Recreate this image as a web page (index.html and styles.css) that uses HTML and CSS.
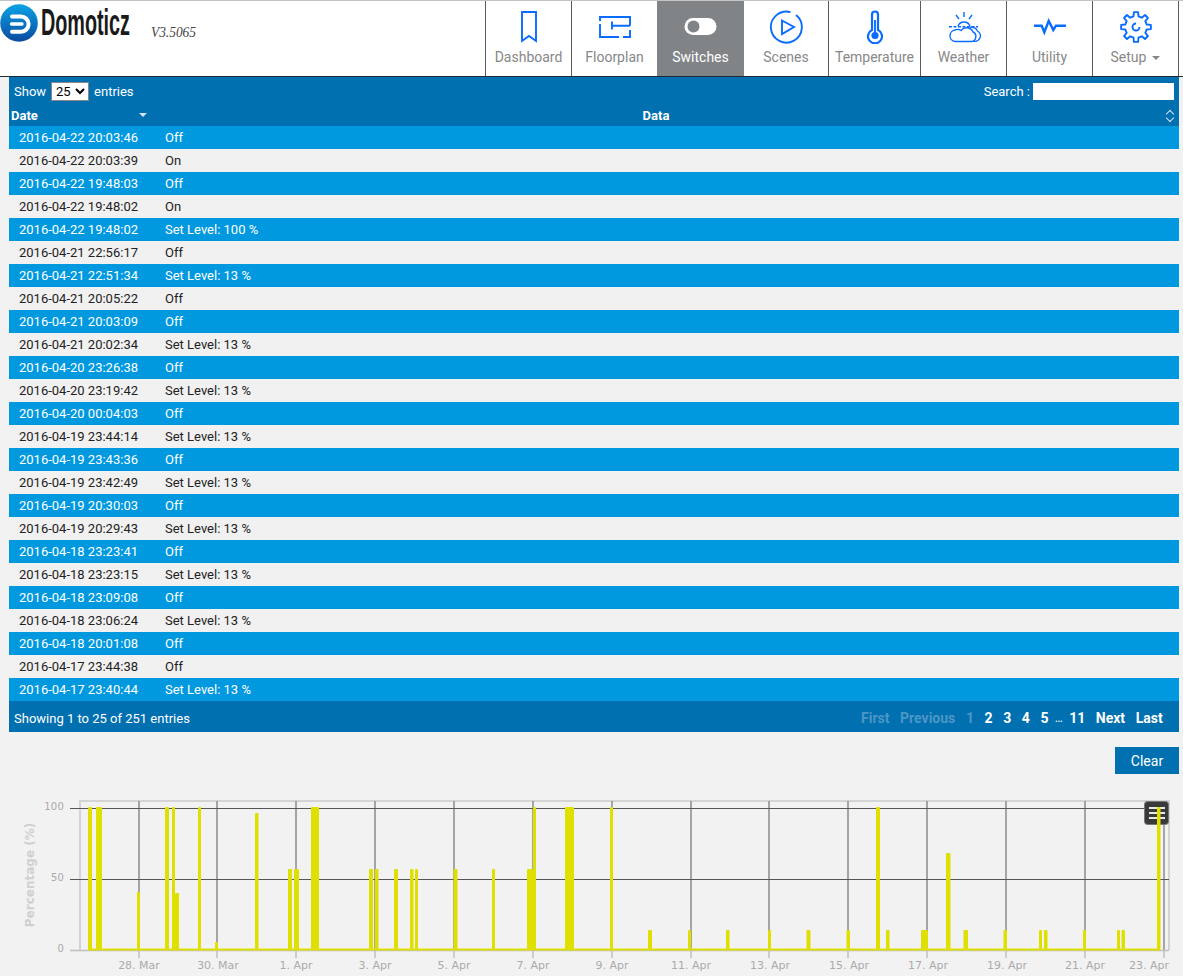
FILE: index.html
```html
<!DOCTYPE html>
<html lang="en">
<head>
<meta charset="utf-8">
<title>Domoticz</title>
<link rel="stylesheet" href="styles.css">
</head>
<body>
<header class="topbar">
  <a class="brand">
    <svg class="brand-logo" width="200" height="50" viewBox="0 0 200 50">
      <defs>
        <linearGradient id="logoFill" x1="0" y1="0" x2="0" y2="1">
          <stop offset="0" stop-color="#0ba3e6"/>
          <stop offset="1" stop-color="#0a4aa0"/>
        </linearGradient>
      </defs>
      <circle cx="19" cy="23" r="18.8" fill="url(#logoFill)"/>
      <path d="M12 16.5H21a7.6 7.6 0 0 1 0 15.200H12" fill="none" stroke="#fff" stroke-width="4" stroke-linecap="round"/>
      <path d="M11.500 24H22" fill="none" stroke="#fff" stroke-width="3.400" stroke-linecap="round"/>
      <text class="brand-name" x="41" y="35" textLength="89" lengthAdjust="spacingAndGlyphs">Domoticz</text>
      <text class="brand-version" x="151" y="37" textLength="45" lengthAdjust="spacingAndGlyphs">V3.5065</text>
    </svg>
  </a>
  <nav class="menu">
    <a class="menu-item">
      <svg class="icon" viewBox="0 0 34 34"><path d="M10 2H24V31L17 26L10 31Z"/></svg>
      <span>Dashboard</span>
    </a>
    <a class="menu-item">
      <svg class="icon" viewBox="0 0 34 34"><path d="M2 11V7H32V15.700M14 15.700H32M14 11.500V19.500M2 14V27H21M25 27H32V20"/></svg>
      <span>Floorplan</span>
    </a>
    <a class="menu-item is-active">
      <svg class="icon" viewBox="0 0 34 34"><rect class="toggle-track" x="0.500" y="8" width="32" height="17" rx="8.500"/><circle class="toggle-knob" cx="9.500" cy="16.500" r="6"/></svg>
      <span>Switches</span>
    </a>
    <a class="menu-item is-scenes">
      <svg class="icon" viewBox="0 0 34 34"><path d="M27 5A15.500 15.500 0 1 1 21.500 2.200"/><path d="M13 10.500L25 17L13 24Z"/></svg>
      <span>Scenes</span>
    </a>
    <a class="menu-item is-wide">
      <svg class="icon" viewBox="0 0 34 34"><path stroke-width="2.200" d="M14 20V4.500a3 3 0 0 1 6 0V20a7 7 0 1 1-6 0Z"/><path d="M17 10V25"/><circle class="icon-fill" cx="17" cy="25.500" r="3.600"/></svg>
      <span>Temperature</span>
    </a>
    <a class="menu-item">
      <svg class="icon icon-thin" viewBox="0 0 34 34"><path d="M17 2V7M9 5L12 9M25 5L22 9"/><path stroke-dasharray="3 1.500" d="M2 16.700H31"/><path d="M11 16A6.500 6.500 0 0 1 23 16"/><path d="M8 31.500H24A5 5 0 0 0 26 22A7 7 0 0 0 14 20.500A6 6 0 0 0 8 20A5.800 5.800 0 0 0 8 31.500Z"/><path d="M26 31A5.500 5.500 0 0 0 30.500 21A7 7 0 0 0 23 17.500"/></svg>
      <span>Weather</span>
    </a>
    <a class="menu-item">
      <svg class="icon" viewBox="0 0 34 34"><path stroke-width="2.400" d="M1 15.700H8.700L11.300 22.300L15.700 11L20.300 20L23 15.700H33"/></svg>
      <span>Utility</span>
    </a>
    <a class="menu-item is-last">
      <svg class="icon" viewBox="0 0 34 34"><path stroke-linejoin="round" d="M14.500 6.300L14.900 2.150H19.100L19.500 6.300L22.830 7.670L26.020 5.020L28.980 7.980L26.330 11.170L27.720 14.530L31.850 14.910V19.090L27.720 19.470L26.330 22.830L28.980 26.020L26.020 28.980L22.830 26.330L19.470 27.720L19.090 31.850H14.910L14.530 27.720L11.170 26.330L7.980 28.980L5.020 26.020L7.670 22.830L6.280 19.470L2.150 19.090V14.910L6.280 14.530L7.670 11.170L5.020 7.980L7.980 5.020L11.170 7.670Z"/><path d="M20.500 17A3.500 3.500 0 1 1 17 13.500"/></svg>
      <span>Setup<i class="caret"></i></span>
    </a>
  </nav>
</header>

<main class="content">
  <section class="log">
    <div class="log-controls">
      <label class="length">Show <select class="length-select"><option>25</option></select> entries</label>
      <label class="search">Search :<input class="search-input" type="text"></label>
    </div>
    <table class="log-table">
      <thead>
        <tr>
          <th class="col-date">Date<i class="sort-down"></i></th>
          <th class="col-data">Data<i class="sort-both"></i></th>
        </tr>
      </thead>
      <tbody>
        <tr><td>2016-04-22 20:03:46</td><td>Off</td></tr>
        <tr><td>2016-04-22 20:03:39</td><td>On</td></tr>
        <tr><td>2016-04-22 19:48:03</td><td>Off</td></tr>
        <tr><td>2016-04-22 19:48:02</td><td>On</td></tr>
        <tr><td>2016-04-22 19:48:02</td><td>Set Level: 100 %</td></tr>
        <tr><td>2016-04-21 22:56:17</td><td>Off</td></tr>
        <tr><td>2016-04-21 22:51:34</td><td>Set Level: 13 %</td></tr>
        <tr><td>2016-04-21 20:05:22</td><td>Off</td></tr>
        <tr><td>2016-04-21 20:03:09</td><td>Off</td></tr>
        <tr><td>2016-04-21 20:02:34</td><td>Set Level: 13 %</td></tr>
        <tr><td>2016-04-20 23:26:38</td><td>Off</td></tr>
        <tr><td>2016-04-20 23:19:42</td><td>Set Level: 13 %</td></tr>
        <tr><td>2016-04-20 00:04:03</td><td>Off</td></tr>
        <tr><td>2016-04-19 23:44:14</td><td>Set Level: 13 %</td></tr>
        <tr><td>2016-04-19 23:43:36</td><td>Off</td></tr>
        <tr><td>2016-04-19 23:42:49</td><td>Set Level: 13 %</td></tr>
        <tr><td>2016-04-19 20:30:03</td><td>Off</td></tr>
        <tr><td>2016-04-19 20:29:43</td><td>Set Level: 13 %</td></tr>
        <tr><td>2016-04-18 23:23:41</td><td>Off</td></tr>
        <tr><td>2016-04-18 23:23:15</td><td>Set Level: 13 %</td></tr>
        <tr><td>2016-04-18 23:09:08</td><td>Off</td></tr>
        <tr><td>2016-04-18 23:06:24</td><td>Set Level: 13 %</td></tr>
        <tr><td>2016-04-18 20:01:08</td><td>Off</td></tr>
        <tr><td>2016-04-17 23:44:38</td><td>Off</td></tr>
        <tr><td>2016-04-17 23:40:44</td><td>Set Level: 13 %</td></tr>
      </tbody>
    </table>
    <div class="log-footer">
      <div>Showing 1 to 25 of 251 entries</div>
      <div class="pager">
        <a class="pager-off">First</a>
        <a class="pager-off">Previous</a>
        <a class="pager-off">1</a>
        <a>2</a>
        <a>3</a>
        <a>4</a>
        <a>5</a>
        <span class="pager-gap">…</span>
        <a>11</a>
        <a>Next</a>
        <a>Last</a>
      </div>
    </div>
  </section>

  <div class="actions"><button class="clear-btn" type="button">Clear</button></div>

  <svg class="chart" width="1183" height="186" viewBox="0 790 1183 186">
    <g class="frame">
      <path d="M80 950V801H1169V950"/>
    </g>
    <g class="grid-v">
      <path d="M139 801V950M217 801V950M296 801V950M375 801V950M454 801V950M533 801V950M612 801V950M691 801V950M769 801V950M848 801V950M927 801V950M1006 801V950M1085 801V950M1164 801V950"/>
    </g>
    <g class="grid-h">
      <path d="M70 808.500H1169M70 879.500H1169"/>
    </g>
    <g class="axis">
      <path d="M70 950.500H1169"/>
      <path d="M139 951V958M217 951V958M296 951V958M375 951V958M454 951V958M533 951V958M612 951V958M691 951V958M769 951V958M848 951V958M927 951V958M1006 951V958M1085 951V958M1164 951V958"/>
    </g>
    <g class="ctx-btn">
      <rect x="1144.500" y="801.500" width="24" height="23" rx="3"/>
      <path d="M1149 808H1165M1149 813H1165M1149 818H1165"/>
    </g>
    <g class="bars">
      <rect x="88" y="807" width="4" height="143" rx="1"/>
      <rect x="96" y="807" width="6" height="143" rx="1"/>
      <rect x="137" y="892" width="3" height="58" rx="1"/>
      <rect x="165" y="807" width="4" height="143" rx="1"/>
      <rect x="172" y="807" width="3" height="143" rx="1"/>
      <rect x="175" y="893" width="4" height="57" rx="1"/>
      <rect x="198" y="807" width="3" height="143" rx="1"/>
      <rect x="215" y="942" width="3" height="8" rx="1"/>
      <rect x="255" y="813" width="3.500" height="137" rx="1"/>
      <rect x="288" y="869" width="4" height="81" rx="1"/>
      <rect x="294" y="869" width="5" height="81" rx="1"/>
      <rect x="311" y="807" width="8" height="143" rx="1"/>
      <rect x="369" y="869" width="4" height="81" rx="1"/>
      <rect x="375" y="869" width="3.500" height="81" rx="1"/>
      <rect x="394" y="869" width="4" height="81" rx="1"/>
      <rect x="410" y="869" width="3.500" height="81" rx="1"/>
      <rect x="415" y="869" width="3" height="81" rx="1"/>
      <rect x="453.500" y="869" width="4" height="81" rx="1"/>
      <rect x="492" y="869" width="3" height="81" rx="1"/>
      <rect x="527" y="869" width="6" height="81" rx="1"/>
      <rect x="533" y="807" width="3" height="143" rx="1"/>
      <rect x="565" y="807" width="9" height="143" rx="1"/>
      <rect x="610" y="807" width="3" height="143" rx="1"/>
      <rect x="648" y="930" width="4" height="20" rx="1"/>
      <rect x="688" y="930" width="3" height="20" rx="1"/>
      <rect x="726" y="930" width="3.500" height="20" rx="1"/>
      <rect x="768" y="930" width="3" height="20" rx="1"/>
      <rect x="806.500" y="930" width="4" height="20" rx="1"/>
      <rect x="846.500" y="930" width="3.500" height="20" rx="1"/>
      <rect x="876" y="807" width="4" height="143" rx="1"/>
      <rect x="886" y="930" width="3.500" height="20" rx="1"/>
      <rect x="921" y="930" width="7" height="20" rx="1"/>
      <rect x="946" y="853" width="4.500" height="97" rx="1"/>
      <rect x="963.500" y="930" width="4.500" height="20" rx="1"/>
      <rect x="1003.500" y="930" width="3.500" height="20" rx="1"/>
      <rect x="1039" y="930" width="3" height="20" rx="1"/>
      <rect x="1044" y="930" width="3.500" height="20" rx="1"/>
      <rect x="1083" y="930" width="3" height="20" rx="1"/>
      <rect x="1117" y="930" width="3" height="20" rx="1"/>
      <rect x="1121.500" y="930" width="3.500" height="20" rx="1"/>
      <rect x="1157" y="807" width="3.500" height="143" rx="1"/>
      <rect x="88" y="948.500" width="1072" height="2"/>
    </g>
    <g class="y-labels">
      <text x="64" y="810">100</text>
      <text x="64" y="881">50</text>
      <text x="64" y="952">0</text>
    </g>
    <text class="y-title" transform="translate(34 875) rotate(-90)">Percentage (%)</text>
    <g class="x-labels">
      <text x="139" y="969">28. Mar</text>
      <text x="218" y="969">30. Mar</text>
      <text x="296" y="969">1. Apr</text>
      <text x="375" y="969">3. Apr</text>
      <text x="454" y="969">5. Apr</text>
      <text x="533" y="969">7. Apr</text>
      <text x="612" y="969">9. Apr</text>
      <text x="691" y="969">11. Apr</text>
      <text x="770" y="969">13. Apr</text>
      <text x="849" y="969">15. Apr</text>
      <text x="928" y="969">17. Apr</text>
      <text x="1007" y="969">19. Apr</text>
      <text x="1085" y="969">21. Apr</text>
      <text x="1149" y="969">23. Apr</text>
    </g>
  </svg>
</main>
</body>
</html>
```
FILE: styles.css
```css
* { box-sizing: border-box; }
html, body { margin: 0; padding: 0; }
body {
  background: #f2f2f2;
  color: #222;
  font-family: Roboto, "Liberation Sans", sans-serif;
  font-size: 13px;
  overflow: hidden;
}

/* top bar */
.topbar {
  display: flex;
  justify-content: space-between;
  height: 77px;
  background: #fff;
  border-top: 1px solid #c4c4c4;
  border-bottom: 1px solid #1d2a33;
  padding-right: 4px;
}
.brand { display: block; margin-top: -1px; }
.brand-logo { display: block; }
.brand-name {
  font-family: "Liberation Sans", sans-serif;
  font-weight: 700;
  font-size: 36px;
  fill: #1a1a1a;
}
.brand-version {
  font-family: "Liberation Serif", serif;
  font-style: italic;
  font-size: 15px;
  fill: #444;
}
.menu { display: flex; }
.menu-item {
  display: flex;
  flex-direction: column;
  align-items: center;
  width: 86px;
  padding-top: 9px;
  border-left: 1px solid #5c5c5c;
  color: #888;
  font-size: 14px;
  line-height: 16px;
}
.menu-item.is-scenes { width: 85px; }
.menu-item.is-wide { width: 92px; }
.menu-item.is-last { width: 87px; border-right: 1px solid #5c5c5c; }
.menu-item.is-active {
  background: #808487;
  border-left-color: #808487;
  color: #fff;
}
.menu-item.is-active + .menu-item { border-left-color: #808487; }
.icon {
  display: block;
  width: 34px;
  height: 34px;
  margin-bottom: 5px;
  fill: none;
  stroke: #0a6cff;
  stroke-width: 1.900;
}
.icon-thin { stroke-width: 1.400; }
.icon-fill { fill: #0a6cff; stroke: none; }
.toggle-track { fill: #fff; stroke: none; }
.toggle-knob { fill: #808487; stroke: none; }
.caret {
  display: inline-block;
  margin-left: 6px;
  vertical-align: 2px;
  border-top: 4px solid #888;
  border-left: 4px solid transparent;
  border-right: 4px solid transparent;
}

/* log table */
.content { padding: 0 4px 0 9px; }
.log { background: #0070b1; color: #fff; }
.log-controls {
  display: flex;
  justify-content: space-between;
  align-items: center;
  height: 28px;
  padding: 0 5px;
}
.length { display: flex; align-items: center; gap: 5px; }
.length-select {
  width: 38px;
  height: 19px;
  margin-top: 1px;
  padding: 0;
  border: 1px solid #888;
  border-radius: 0;
  background: #fff;
  color: #000;
  font-family: Roboto, sans-serif;
  font-size: 13px;
}
.search { display: flex; align-items: center; gap: 3px; }
.search-input {
  width: 141px;
  height: 17px;
  padding: 0;
  border: 0;
  background: #fff;
}
.log-table {
  width: 100%;
  border-collapse: collapse;
  table-layout: fixed;
}
.log-table th {
  position: relative;
  height: 21px;
  padding: 0 24px 0 2px;
  font-size: 13px;
  font-weight: 700;
  line-height: 21px;
}
.col-date { width: 146px; text-align: left; }
.col-data { text-align: center; }
.sort-down {
  position: absolute;
  right: 8px;
  top: 8px;
  border-top: 4px solid #d8e4ee;
  border-left: 4px solid transparent;
  border-right: 4px solid transparent;
}
.sort-both {
  position: absolute;
  right: 5px;
  top: 5px;
  width: 8px;
  height: 11px;
}
.sort-both::before,
.sort-both::after {
  content: "";
  position: absolute;
  left: 1px;
  width: 5px;
  height: 5px;
  border-left: 1px solid #d8e4ee;
  border-top: 1px solid #d8e4ee;
}
.sort-both::before { top: 1px; transform: rotate(45deg); }
.sort-both::after { top: 5px; transform: rotate(225deg); }
.log-table td {
  height: 23px;
  padding: 0 10px;
  line-height: 23px;
}
.log-table tbody tr:nth-child(odd) td { background: #0099e0; color: #fff; }
.log-table tbody tr:nth-child(even) td { background: #f1f1f1; color: #222; }
.log-footer {
  display: flex;
  justify-content: space-between;
  align-items: center;
  height: 31px;
  padding: 3px 11px 0 5px;
}
.pager { display: flex; align-items: center; gap: 0; font-size: 14px; font-weight: 700; }
.pager a { padding: 0 5.300px; }
.pager-off { color: #4d96c6; }
.pager-gap { font-weight: 400; font-size: 12px; padding: 0 1px; }

/* clear button */
.actions {
  display: flex;
  justify-content: flex-end;
  margin-top: 15px;
  height: 27px;
}
.clear-btn {
  width: 64px;
  height: 27px;
  padding: 0;
  border: 0;
  background: #0070b1;
  color: #fff;
  font-family: Roboto, sans-serif;
  font-size: 14px;
}

/* chart */
.chart {
  display: block;
  margin: 16px 0 0 -9px;
  font-family: "DejaVu Sans", sans-serif;
}
.frame path { fill: none; stroke: #d4d4d4; stroke-width: 2; }
.grid-v path { fill: none; stroke: #8c8c8c; stroke-width: 1.500; }
.grid-h path { fill: none; stroke: #555; stroke-width: 1; }
.axis path { fill: none; stroke: #c0c0c0; stroke-width: 1.500; }
.ctx-btn rect { fill: #3a3a3a; stroke: #777; stroke-width: 1; }
.ctx-btn path { fill: none; stroke: #e8e8e8; stroke-width: 2; }
.bars rect { fill: #dfdf00; }
.y-labels text { fill: #aaa; font-size: 10px; text-anchor: end; letter-spacing: .2px; }
.x-labels text { fill: #aaa; font-size: 11px; text-anchor: middle; }
.y-title { fill: #d0d0d0; font-size: 12px; font-weight: 700; text-anchor: middle; }
```
